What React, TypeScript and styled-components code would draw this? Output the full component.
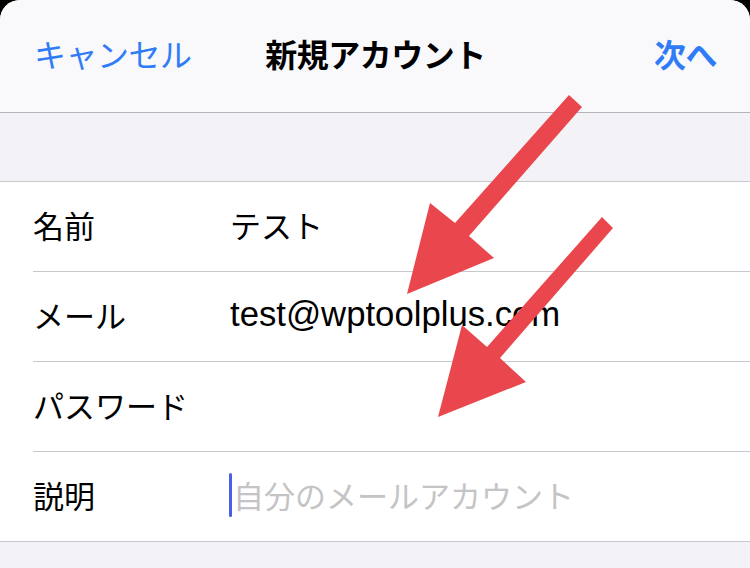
import styled, { createGlobalStyle } from "styled-components";

const GlobalStyle = createGlobalStyle`
    html, body {
        margin: 0;
        padding: 0;
        background: #000;
    }
    body {
        font-family: "Liberation Sans", "Noto Sans CJK JP", sans-serif;
    }
`

const Sheet = styled.div`
    position: relative;
    width: 750px;
    height: 568px;
    overflow: hidden;
    background: #f2f2f7;
    border-radius: 20px 20px 0 0;
    display: flex;
    flex-direction: column;
`

const NavBar = styled.div`
    height: 113px;
    flex-shrink: 0;
    box-sizing: border-box;
    background: #f9f9fb;
    border-bottom: 1px solid #b4b4b8;
    display: grid;
    grid-template-columns: 1fr auto 1fr;
    align-items: center;
    padding: 0 33px 6px 34px;
    font-size: 32px;
`

const NavButton = styled.span<{ $align: "left" | "right"; $bold?: boolean }>`
    color: #2f7cf6;
    justify-self: ${p => p.$align === "left" ? "start" : "end"};
    font-weight: ${p => p.$bold ? 700 : 400};
    letter-spacing: -0.5px;
`

const Title = styled.span`
    color: #000;
    font-weight: 700;
    letter-spacing: -0.5px;
`

const Band = styled.div`
    height: 68px;
    flex-shrink: 0;
    border-bottom: 1px solid #c8c7cc;
`

const List = styled.div`
    background: #fff;
    border-bottom: 1px solid #c8c7cc;
    padding-left: 33px;
`

const Row = styled.div<{ $last?: boolean }>`
    height: ${p => p.$last ? "89px" : "90px"};
    box-sizing: border-box;
    padding-bottom: 4px;
    display: flex;
    align-items: center;
    border-bottom: ${p => p.$last ? "none" : "1px solid #c8c7cc"};
    font-size: 31px;
    color: #000;
`

const Label = styled.span`
    width: 197px;
    flex-shrink: 0;
`

const Value = styled.span<{ $latin?: boolean }>`
    font-size: ${p => p.$latin ? "34.7px" : "31px"};
    display: flex;
    align-items: center;
`

const Caret = styled.span`
    width: 3px;
    height: 44px;
    border-radius: 1.5px;
    background: #4a5ee8;
    margin-left: -1px;
    margin-right: 1px;
`

const Placeholder = styled.span`
    color: #c4c4c6;
`

const Arrows = styled.svg`
    position: absolute;
    left: 0;
    top: 0;
    pointer-events: none;
`

export default function App() {
    return (
        <>
            <GlobalStyle />
            <Sheet>
                <NavBar>
                    <NavButton $align="left">キャンセル</NavButton>
                    <Title>新規アカウント</Title>
                    <NavButton $align="right" $bold>次へ</NavButton>
                </NavBar>
                <Band />
                <List>
                    <Row>
                        <Label>名前</Label>
                        <Value>テスト</Value>
                    </Row>
                    <Row>
                        <Label>メール</Label>
                        <Value $latin>test@wptoolplus.com</Value>
                    </Row>
                    <Row>
                        <Label>パスワード</Label>
                        <Value />
                    </Row>
                    <Row $last>
                        <Label>説明</Label>
                        <Value>
                            <Caret />
                            <Placeholder>自分のメールアカウント</Placeholder>
                        </Value>
                    </Row>
                </List>
                <Arrows width="750" height="568" viewBox="0 0 750 568">
                    <polygon
                        fill="#e9474d"
                        points="569,95 582,107 469,236 494,258 407,294 430,203 455,223"
                    />
                    <polygon
                        fill="#e9474d"
                        points="602,217 613,228 500,358 526,382 438,417 462,325 487,347"
                    />
                </Arrows>
            </Sheet>
        </>
    )
}
